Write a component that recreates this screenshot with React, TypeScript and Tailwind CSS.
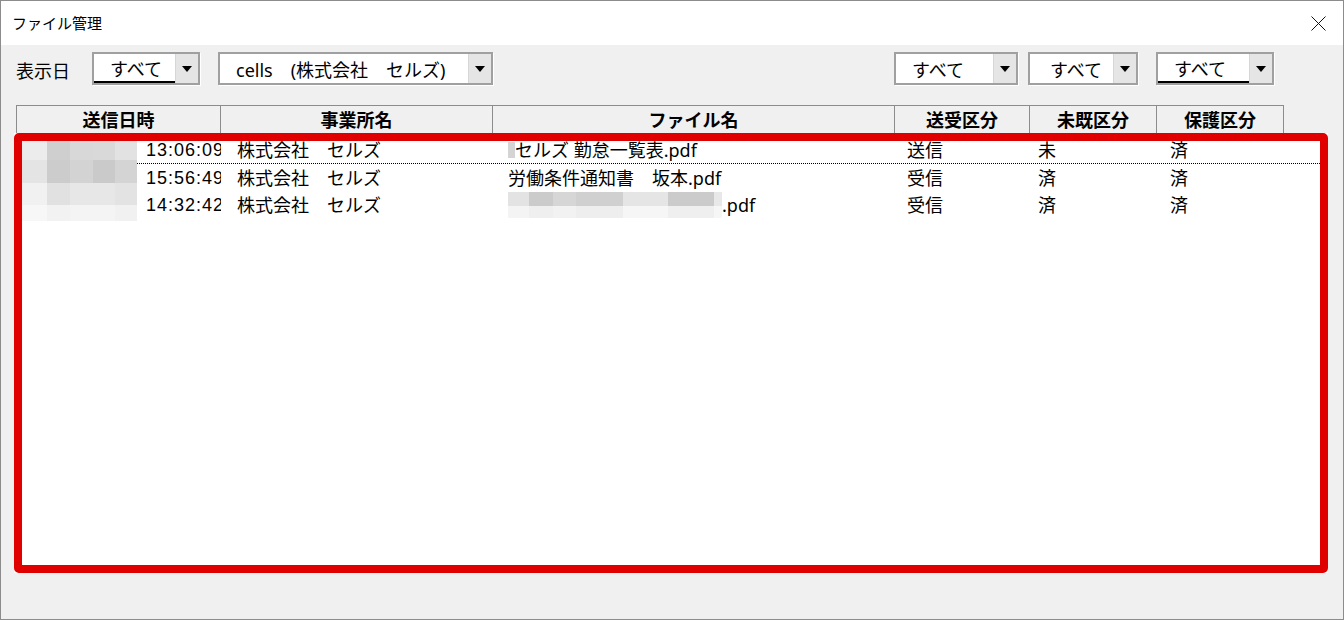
import { ReactNode } from "react";

const font = "font-['Noto_Sans','Noto_Sans_CJK_JP',sans-serif]";

type ComboProps = {
  text: string;
  width: string;
  textClass: string;
  underline?: boolean;
};

function Combo({ text, width, textClass, underline }: ComboProps) {
  return (
    <div className={`${width} h-[33px] flex border-2 border-[#a0a0a0] bg-white shadow-[1px_1px_0_#ffffff]`}>
      <div className={`flex-1 flex items-center pt-[3px] ${textClass} ${underline ? "border-b-2 border-black" : ""}`}>
        <span className="text-[18px] leading-none text-black whitespace-nowrap">{text}</span>
      </div>
      <div className="w-[23px] bg-[#e5e5e5] border-l border-[#d6d6d6] flex items-center justify-center">
        <svg width="10" height="6" viewBox="0 0 10 6">
          <path d="M0 0 H10 L5 6 Z" fill="#000" />
        </svg>
      </div>
    </div>
  );
}

function Cell({ w, className = "", children }: { w: string; className?: string; children?: ReactNode }) {
  return <div className={`${w} h-full shrink-0 overflow-hidden whitespace-nowrap flex items-center ${className}`}>{children}</div>;
}

const headers = [
  { label: "送信日時", w: "w-[203px]", first: true },
  { label: "事業所名", w: "w-[272px]" },
  { label: "ファイル名", w: "w-[402px]" },
  { label: "送受区分", w: "w-[135px]" },
  { label: "未既区分", w: "w-[127px]" },
  { label: "保護区分", w: "w-[127px]" },
];

const rows = [
  { time: "13:06:09", office: "株式会社　セルズ", file: "row1", dir: "送信", read: "未", prot: "済" },
  { time: "15:56:49", office: "株式会社　セルズ", file: "労働条件通知書　坂本.pdf", dir: "受信", read: "済", prot: "済" },
  { time: "14:32:42", office: "株式会社　セルズ", file: "row3", dir: "受信", read: "済", prot: "済" },
];

// pixelated redaction of the date part
const mosaic = [
  { h: "h-[23px]", c: ["bg-[#ececec]", "bg-[#cfcfcf]", "bg-[#d8d8d8]", "bg-[#d9d9d9]", "bg-[#e2e2e2]"] },
  { h: "h-[23px]", c: ["bg-[#e4e4e4]", "bg-[#cccccc]", "bg-[#d3d3d3]", "bg-[#cacaca]", "bg-[#d4d4d4]"] },
  { h: "h-[22px]", c: ["bg-[#f1f1f1]", "bg-[#e1e1e1]", "bg-[#e7e7e7]", "bg-[#e7e7e7]", "bg-[#e3e3e3]"] },
  { h: "h-[16px]", c: ["bg-[#f7f7f7]", "bg-[#f2f2f2]", "bg-[#f4f4f4]", "bg-[#f4f4f4]", "bg-[#f1f1f1]"] },
];
const mosaicW = ["w-[31px]", "w-[23px]", "w-[23px]", "w-[22px]", "w-[22px]"];

const fileBlocks = [
  { w: "w-[21px]", t: "bg-[#e3e3e3]", b: "bg-[#f4f4f4]" },
  { w: "w-[24px]", t: "bg-[#cbcbcb]", b: "bg-[#efefef]" },
  { w: "w-[23px]", t: "bg-[#d6d6d6]", b: "bg-[#f2f2f2]" },
  { w: "w-[47px]", t: "bg-[#d0d0d0]", b: "bg-[#eeeeee]" },
  { w: "w-[45px]", t: "bg-[#e5e5e5]", b: "bg-[#f6f6f6]" },
  { w: "w-[46px]", t: "bg-[#cbcbcb]", b: "bg-[#efefef]" },
  { w: "w-[8px]", t: "bg-[#e8e8e8]", b: "bg-[#f6f6f6]" },
];

function FileName({ file }: { file: string }) {
  if (file === "row1") {
    return (
      <div className="flex items-center">
        <span className="block w-[7px] h-[16px] bg-[#d4d4d4]" />
        <span>セルズ 勤怠一覧表.pdf</span>
      </div>
    );
  }
  if (file === "row3") {
    return (
      <div className="flex items-center h-full">
        <div className="flex">
          {fileBlocks.map((b, i) => (
            <div key={i} className={`${b.w} flex flex-col`}>
              <div className={`h-[14px] ${b.t}`} />
              <div className={`h-[12px] ${b.b}`} />
            </div>
          ))}
        </div>
        <span>.pdf</span>
      </div>
    );
  }
  return <span>{file}</span>;
}

export default function App() {
  return (
    <div className={`w-[1344px] h-[620px] border border-[#8c8c8c] bg-[#f0f0f0] flex flex-col ${font} text-black`}>
      {/* title bar */}
      <div className="h-[44px] bg-white flex items-center justify-between pl-[11px] pr-[17px]">
        <span className="text-[15px]">ファイル管理</span>
        <svg width="15" height="15" viewBox="0 0 15 15">
          <path d="M0.5 0.5 L14.5 14.5 M14.5 0.5 L0.5 14.5" stroke="#111" strokeWidth="1" />
        </svg>
      </div>

      {/* filters */}
      <div className="mt-[7px] h-[33px] flex items-center pl-[15px]">
        <span className="w-[76px] text-[18px] leading-none pt-[4px]">表示日</span>
        <Combo text="すべて" width="w-[108px]" textClass="pl-[16px]" underline />
        <div className="ml-[18px]">
          <Combo text="cells　(株式会社　セルズ)" width="w-[275px]" textClass="pl-[16px]" />
        </div>
        <div className="ml-[401px]">
          <Combo text="すべて" width="w-[124px]" textClass="pl-[16px]" />
        </div>
        <div className="ml-[10px]">
          <Combo text="すべて" width="w-[110px]" textClass="pl-[20px]" />
        </div>
        <div className="ml-[18px]">
          <Combo text="すべて" width="w-[118px]" textClass="pl-[16px]" underline />
        </div>
      </div>

      {/* column headers */}
      <div className="mt-[20px] ml-[15px] w-[1268px] h-[28px] flex border-t border-l border-r border-[#8c8c8c]">
        {headers.map((h) => (
          <div
            key={h.label}
            className={`${h.w} shrink-0 flex items-center justify-center text-[18px] font-bold leading-none ${h.first ? "" : "border-l border-[#8c8c8c]"}`}
          >
            {h.label}
          </div>
        ))}
      </div>

      {/* list */}
      <div className="ml-[13px] w-[1314px] h-[440px] relative bg-white overflow-hidden">
        <div className="pt-[4px]">
          {rows.map((r, i) => (
            <div
              key={i}
              className={`h-[27px] flex items-center text-[18px] leading-[26px] ${i === 0 ? "border-b border-dotted border-black" : ""}`}
            >
              <Cell w="w-[207px]" className="pl-[132px]">
                <span className="font-['Liberation_Sans',sans-serif] tracking-[1px]">{r.time}</span>
              </Cell>
              <Cell w="w-[272px]" className="pl-[16px]">{r.office}</Cell>
              <Cell w="w-[402px]" className="pl-[15px]">
                <FileName file={r.file} />
              </Cell>
              <Cell w="w-[135px]" className="pl-[12px]">{r.dir}</Cell>
              <Cell w="w-[127px]" className="pl-[8px]">{r.read}</Cell>
              <Cell w="w-[150px]" className="pl-[13px]">{r.prot}</Cell>
            </div>
          ))}
        </div>

        {/* redaction mosaic over the dates */}
        <div className="absolute top-[4px] left-[2px] flex flex-col">
          {mosaic.map((row, ri) => (
            <div key={ri} className={`flex ${row.h}`}>
              {row.c.map((c, ci) => (
                <div key={ci} className={`${mosaicW[ci]} ${c}`} />
              ))}
            </div>
          ))}
        </div>

        {/* red highlight frame */}
        <div className="absolute inset-0 border-[8px] border-[#e00000] rounded-[5px] pointer-events-none" />
      </div>
    </div>
  );
}
